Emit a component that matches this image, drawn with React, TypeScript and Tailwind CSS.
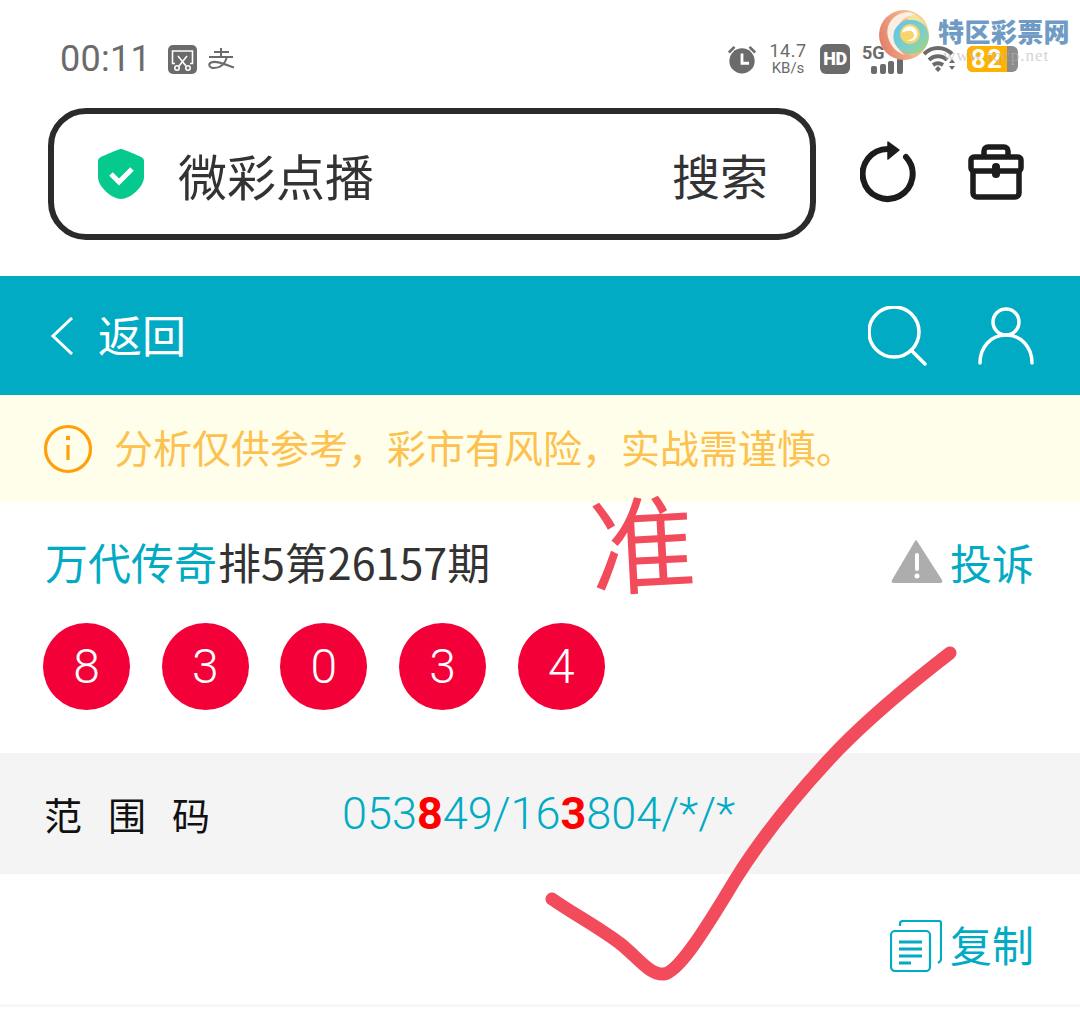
const cjk = "font-['Noto_Sans_CJK_SC','Noto_Sans',sans-serif]";

const Ball = ({ n }: { n: number }) => (
  <div className="flex size-[87px] items-center justify-center rounded-full bg-[#f20037] font-['Roboto',sans-serif] text-[48px] font-light text-white">
    {n}
  </div>
);

const StatusBar = () => (
  <div className="flex h-[108px] items-center pl-[60px] pr-[62px] pt-[10px] text-[#6b6b6b]">
    <span className="font-['Roboto',sans-serif] text-[36px] leading-none tracking-[0.3px]">00:11</span>
    <div className="ml-[17px] flex size-[29px] items-center justify-center rounded-[5px] bg-[#6b6b6b]">
      <svg viewBox="0 0 29 29" className="size-[29px]" fill="none" stroke="#fff" strokeWidth="1.6">
        <path d="M7 18.500H4.500V6h20v12.500H22" />
        <path d="M10 11l8 10M19 11l-8 10" />
        <circle cx="9" cy="23" r="2.200" />
        <circle cx="20" cy="23" r="2.200" />
      </svg>
    </div>
    {/* alipay mark */}
    <svg viewBox="0 0 28 24" className="ml-[10px] h-[24px] w-[28px]" fill="none" stroke="#6b6b6b" strokeWidth="2">
      <path d="M7 5h15M2 10h24M14 1v9" />
      <path d="M20 10c-2 7-7 11-13 11-5 0-6-4-3-5.500 5-2.500 14 2 23 5" />
    </svg>

    <div className="ml-auto flex items-center">
      <svg viewBox="0 0 32 32" className="size-[30px]" fill="#6b6b6b">
        <circle cx="16" cy="18" r="13.500" />
        <path d="M1 8l6-6 2 2-6 6zM31 8l-6-6-2 2 6 6z" />
        <path d="M14.500 10h3v9h6v3h-9z" fill="#fff" />
      </svg>
      <div className="ml-[10px] flex w-[42px] flex-col items-center font-['Roboto',sans-serif] leading-none">
        <span className="text-[18px] tracking-[0.5px]">14.7</span>
        <span className="mt-[1px] text-[15px]">KB/s</span>
      </div>
      <div className="ml-[11px] flex size-[30px] items-center justify-center rounded-[6px] bg-[#6b6b6b] font-['Roboto',sans-serif] text-[18px] font-black leading-none tracking-[-0.5px] text-white">
        HD
      </div>
      <div className="relative ml-[12px] h-[30px] w-[44px]">
        <span className="absolute left-0 top-0 font-['Roboto',sans-serif] text-[18px] font-bold leading-none">5G</span>
        <div className="absolute bottom-0 left-[9px] flex items-end gap-[2.500px]">
          <div className="h-[8px] w-[6px] rounded-[2px] bg-[#6b6b6b]" />
          <div className="h-[10px] w-[6px] rounded-[2px] bg-[#6b6b6b]" />
          <div className="h-[13px] w-[6px] rounded-[2px] bg-[#6b6b6b]" />
          <div className="h-[16px] w-[6px] rounded-[2px] bg-[#6b6b6b]" />
        </div>
      </div>
      <svg viewBox="0 0 32 30" className="ml-[17px] h-[30px] w-[32px]" fill="none" stroke="#6b6b6b" strokeWidth="4">
        <path d="M1 10c8-8 20-8 28 0M6 16c5-5 13-5 18 0M10 21c3-2 7-2 10 0" />
        <path d="M12 25l3-3 3 3-3 3z" fill="#6b6b6b" stroke="none" />
        <path d="M26 19l3-4 3 4zM26 22l3 4 3-4z" fill="#6b6b6b" stroke="none" />
      </svg>
      <div className="ml-[12px] flex h-[26px] w-[51px] items-stretch overflow-hidden rounded-[6px] bg-[#8c8c8c]">
        <div className="flex w-[40px] items-center justify-center bg-[#ffb300] font-['Roboto',sans-serif] text-[26px] font-bold leading-none tracking-[1px] text-white">
          82
        </div>
      </div>
    </div>
  </div>
);

const Watermark = () => (
  <div className="absolute left-[878px] top-[9px] h-[62px] w-[202px]">
    <svg viewBox="0 0 52 52" className="absolute left-0 top-0 size-[52px]">
      <defs>
        <linearGradient id="rim" x1="0" y1="0.6" x2="1" y2="0.3">
          <stop offset="0" stopColor="#e57f68" />
          <stop offset="0.6" stopColor="#efb88e" />
          <stop offset="1" stopColor="#f0d98c" />
        </linearGradient>
        <linearGradient id="swirl" x1="0" y1="0" x2="1" y2="1">
          <stop offset="0" stopColor="#5cc4ee" />
          <stop offset="0.6" stopColor="#7fd0c4" />
          <stop offset="1" stopColor="#a9d36e" />
        </linearGradient>
      </defs>
      <circle cx="26" cy="26" r="25" fill="url(#rim)" />
      <path d="M32 3C16 3 7 15 10 28c2 9 9 16 17 18-6-4-10-11-9-20C19 14 26 7 38 6z" fill="#fbeee3" />
      <path d="M38 6c7 4 11 12 10 21-1 10-8 18-16 19 6-4 11-10 11-18 0-8-5-17-15-18 3-2 6-4 10-4z" fill="#f6e39a" />
      <path d="M32 11a17 17 0 1 1-6 32C17 39 14 31 16 23c2-7 9-12 16-12z" fill="url(#swirl)" />
      <circle cx="32" cy="25" r="10" fill="#f8d46a" />
      <path d="M24 24c1-5 6-8 11-6 4 2 6 7 3 11-2 3-6 4-9 2 4 0 7-2 7-5s-3-5-6-4c-3 0-5 1-6 2z" fill="#fff" />
    </svg>
    <span className={`absolute left-[60px] top-[4px] whitespace-nowrap text-[26px] font-black leading-[36px] tracking-[0.4px] text-[#6f9bc4] ${cjk}`}>
      特区彩票网
    </span>
    <span className="absolute left-[65px] top-[38px] whitespace-nowrap font-['Liberation_Serif',serif] text-[17px] leading-none tracking-[1px] text-[#b4b4b4]/60">
      www.tqcp.net
    </span>
  </div>
);

const SearchRow = () => (
  <div className="flex h-[168px] items-start pl-[48px]">
    <div className={`flex h-[132px] w-[768px] items-center rounded-[38px] border-[6px] border-[#2b2b2b] pl-[44px] pr-[42px] text-[#333] ${cjk}`}>
      <svg viewBox="0 0 46 50" className="h-[50px] w-[46px]">
        <path d="M23 0c2 0 16 6 20 8 2 1 3 2 3 4v16c0 10-14 22-23 22S0 38 0 28V12c0-2 1-3 3-4 4-2 18-8 20-8z" fill="#06c98f" />
        <path d="M13 25l8 8 13-13" fill="none" stroke="#fff" strokeWidth="5" />
      </svg>
      <span className="ml-[34px] text-[49px] leading-none">微彩点播</span>
      <span className="ml-auto text-[48px] leading-none">搜索</span>
    </div>
    <svg viewBox="0 0 56 62" className="ml-[44px] mt-[33px] h-[62px] w-[56px]" fill="none" stroke="#1c1c1c" strokeWidth="6">
      <path d="M46 16a25 25 0 1 1-18-8" strokeLinecap="round" />
      <path d="M28 1l11 8-11 9z" fill="#1c1c1c" stroke="#1c1c1c" strokeWidth="1.500" strokeLinejoin="round" />
    </svg>
    <svg viewBox="0 0 56 56" className="ml-[52px] mt-[36px] size-[56px]" fill="none" stroke="#1c1c1c" strokeWidth="5.500" strokeLinejoin="round">
      <path d="M16 12V7a4 4 0 0 1 4-4h16a4 4 0 0 1 4 4v5" />
      <rect x="3" y="13" width="50" height="14" rx="3" />
      <path d="M5 27v22a4 4 0 0 0 4 4h38a4 4 0 0 0 4-4V27" />
      <path d="M28 23v7" strokeWidth="8" strokeLinecap="round" />
    </svg>
  </div>
);

const Header = () => (
  <div className={`flex h-[119px] items-center bg-[#02abc4] pl-[50px] pr-[46px] text-white ${cjk}`}>
    <svg viewBox="0 0 24 38" className="h-[38px] w-[24px]" fill="none" stroke="#fff" strokeWidth="3">
      <path d="M22 1L3 19l19 18" />
    </svg>
    <span className="mb-[4px] ml-[24px] text-[44px] leading-none">返回</span>
    <svg viewBox="0 0 60 60" className="ml-auto size-[60px]" fill="none" stroke="#fff" strokeWidth="3.500" strokeLinecap="round">
      <circle cx="26" cy="26" r="25" />
      <path d="M43 44l14 14" />
    </svg>
    <svg viewBox="0 0 56 58" className="ml-[50px] h-[58px] w-[56px]" fill="none" stroke="#fff" strokeWidth="3.500" strokeLinecap="round">
      <circle cx="28" cy="15" r="13" />
      <path d="M2 56c0-16 11-28 26-28s26 12 26 28" />
    </svg>
  </div>
);

const Notice = () => (
  <div className={`flex h-[108px] items-center bg-[#fffeea] pl-[43px] ${cjk}`}>
    <svg viewBox="0 0 50 50" className="size-[50px]" fill="none" stroke="#ff9f0a" strokeWidth="3.200">
      <circle cx="25" cy="25" r="22.500" />
      <path d="M25 21v15" />
      <path d="M25 12v4" strokeWidth="4" />
    </svg>
    <span className="mb-[6px] ml-[21px] whitespace-nowrap text-[39px] leading-none text-[#fcc14f]">
      分析仅供参考，彩市有风险，实战需谨慎。
    </span>
  </div>
);

const Result = () => (
  <div className="h-[250px] pl-[43px] pr-[46px]">
    <div className={`flex h-[120px] items-center ${cjk}`}>
      <span className="mb-[4px] ml-[2px] text-[43px] leading-none text-[#02abc4]">万代传奇</span>
      <span className="mb-[4px] ml-[1px] text-[43px] leading-none text-[#333]">排5第26157期</span>
      <svg viewBox="0 0 54 46" className="ml-auto mb-[4px] h-[46px] w-[54px]">
        <path d="M27 3L52 42c1 2 0 3-2 3H4c-2 0-3-1-2-3L25 3c1-1.500 1-1.500 2 0z" fill="#adadad" />
        <path d="M27 17v14" stroke="#fff" strokeWidth="4" strokeLinecap="round" />
        <circle cx="27" cy="38" r="2.500" fill="#fff" />
      </svg>
      <span className="mb-[2px] ml-[6px] text-[42px] leading-none text-[#02abc4]">投诉</span>
    </div>
    <div className="flex gap-[31.700px]">
      {[8, 3, 0, 3, 4].map((n, i) => (
        <Ball key={i} n={n} />
      ))}
    </div>
  </div>
);

const RangeRow = () => (
  <div className="flex h-[121px] items-center bg-[#f4f4f4] pl-[44px]">
    <span className={`w-[298px] text-[38px] leading-none tracking-[26px] text-[#111] ${cjk}`}>范围码</span>
    <span className="font-['Roboto',sans-serif] text-[45px] font-light leading-none text-[#02abc4]">
      053<b className="font-bold text-[#ff0000]">8</b>49/16<b className="font-bold text-[#ff0000]">3</b>804/*/*
    </span>
  </div>
);

const CopyRow = () => (
  <div className={`flex h-[133px] items-center justify-end border-b-[3px] border-[#f7f7f7] pr-[46px] pt-[13px] ${cjk}`}>
    <svg viewBox="0 0 52 52" className="size-[52px]" fill="none" stroke="#02abc4" strokeWidth="2.200">
      <path d="M10 6V4c0-2 1-3 3-3h36c1 0 2 1 2 2v36c0 2-1 3-3 4" />
      <rect x="1" y="11" width="39" height="40" rx="4" />
      <path d="M9 22h23M9 29h23M9 36h23M9 43h12" strokeWidth="2.800" />
    </svg>
    <span className="mb-[3px] ml-[8px] text-[42px] leading-none text-[#02abc4]">复制</span>
  </div>
);

export default function App() {
  return (
    <div className="relative h-[1024px] w-[1080px] overflow-hidden bg-white">
      <StatusBar />
      <SearchRow />
      <Header />
      <Notice />
      <Result />
      <RangeRow />
      <CopyRow />

      {/* handwritten marks on top of the page */}
      <span className={`absolute left-[589px] top-[474px] -rotate-3 text-[106px] font-normal leading-[130px] text-[#f24c5c] ${cjk}`}>
        准
      </span>
      <svg viewBox="0 0 1080 1024" className="pointer-events-none absolute left-0 top-0 h-[1024px] w-[1080px]" fill="none">
        <path
          d="M552 899C575 915 600 928 622 945C640 960 650 975 664 974C678 972 702 935 735 880C765 832 800 790 838 750C875 712 915 680 950 653"
          stroke="#f24c5c"
          strokeWidth="13"
          strokeLinecap="round"
          strokeLinejoin="round"
        />
      </svg>
      <Watermark />
    </div>
  );
}
